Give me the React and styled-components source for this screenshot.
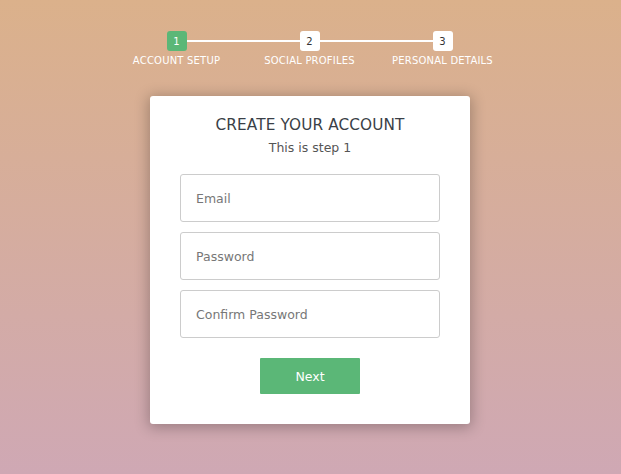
import React from "react";
import styled, { createGlobalStyle } from "styled-components";

const Global = createGlobalStyle`
  html, body { margin: 0; padding: 0; height: 100%; }
  body {
    font-family: "DejaVu Sans", "Open Sans", sans-serif;
    background: linear-gradient(#dbb18b, #cfa8b4);
    min-height: 474px;
  }
  #root { min-height: 474px; }
`;

const Page = styled.div`
  display: flex;
  flex-direction: column;
  align-items: center;
  padding: 31px 1px 0 0;
`;

const Steps = styled.ol`
  list-style: none;
  margin: 0 0 0 -1px;
  padding: 0;
  display: grid;
  grid-template-columns: repeat(3, 133px);
`;

const Step = styled.li`
  position: relative;
  display: flex;
  flex-direction: column;
  align-items: center;
  gap: 4px;
  &:not(:first-child)::before {
    content: "";
    position: absolute;
    top: 9px;
    left: -50%;
    width: 100%;
    height: 2px;
    background: #fff;
    z-index: 0;
  }
`;

const Badge = styled.span`
  position: relative;
  z-index: 1;
  width: 20px;
  height: 20px;
  border-radius: 3px;
  display: flex;
  align-items: center;
  justify-content: center;
  font-size: 10px;
  background: ${(p) => (p.$active ? "#5bb777" : "#fff")};
  color: ${(p) => (p.$active ? "#fff" : "#333")};
`;

const Label = styled.span`
  font-size: 10px;
  line-height: 12px;
  color: #fff;
  white-space: nowrap;
  letter-spacing: 0.2px;
`;

const Card = styled.form`
  margin-top: 29px;
  width: 320px;
  box-sizing: border-box;
  background: #fff;
  border-radius: 3px;
  box-shadow: 0 2px 14px 2px rgba(0, 0, 0, 0.25);
  padding: 20px 30px 30px;
  display: flex;
  flex-direction: column;
  align-items: center;
`;

const Title = styled.h2`
  margin: 0;
  font-size: 15.3px;
  line-height: 18px;
  font-weight: normal;
  color: #3a3f47;
  letter-spacing: 0.1px;
`;

const Subtitle = styled.h3`
  margin: 6px 0 19px;
  font-size: 12.5px;
  line-height: 15px;
  font-weight: normal;
  color: #555;
`;

const Fields = styled.div`
  display: flex;
  flex-direction: column;
  gap: 10px;
  width: 100%;
`;

const Input = styled.input`
  width: 100%;
  height: 48px;
  box-sizing: border-box;
  border: 1px solid #ccc;
  border-radius: 3px;
  padding: 0 15px;
  font-family: inherit;
  font-size: 12.5px;
  color: #2c3e50;
  outline: none;
  &::placeholder { color: #777; }
`;

const Button = styled.button`
  margin-top: 20px;
  width: 100px;
  height: 36px;
  border: none;
  border-radius: 1px;
  background: #5bb777;
  color: #fff;
  font-family: inherit;
  font-size: 12.5px;
  cursor: pointer;
`;

const steps = ["ACCOUNT SETUP", "SOCIAL PROFILES", "PERSONAL DETAILS"];

export default function App() {
  return (
    <>
      <Global />
      <Page>
        <Steps>
          {steps.map((s, i) => (
            <Step key={s}>
              <Badge $active={i === 0}>{i + 1}</Badge>
              <Label>{s}</Label>
            </Step>
          ))}
        </Steps>
        <Card onSubmit={(e) => e.preventDefault()}>
          <Title>CREATE YOUR ACCOUNT</Title>
          <Subtitle>This is step 1</Subtitle>
          <Fields>
            <Input type="text" placeholder="Email" />
            <Input type="password" placeholder="Password" />
            <Input type="password" placeholder="Confirm Password" />
          </Fields>
          <Button type="button">Next</Button>
        </Card>
      </Page>
    </>
  );
}
